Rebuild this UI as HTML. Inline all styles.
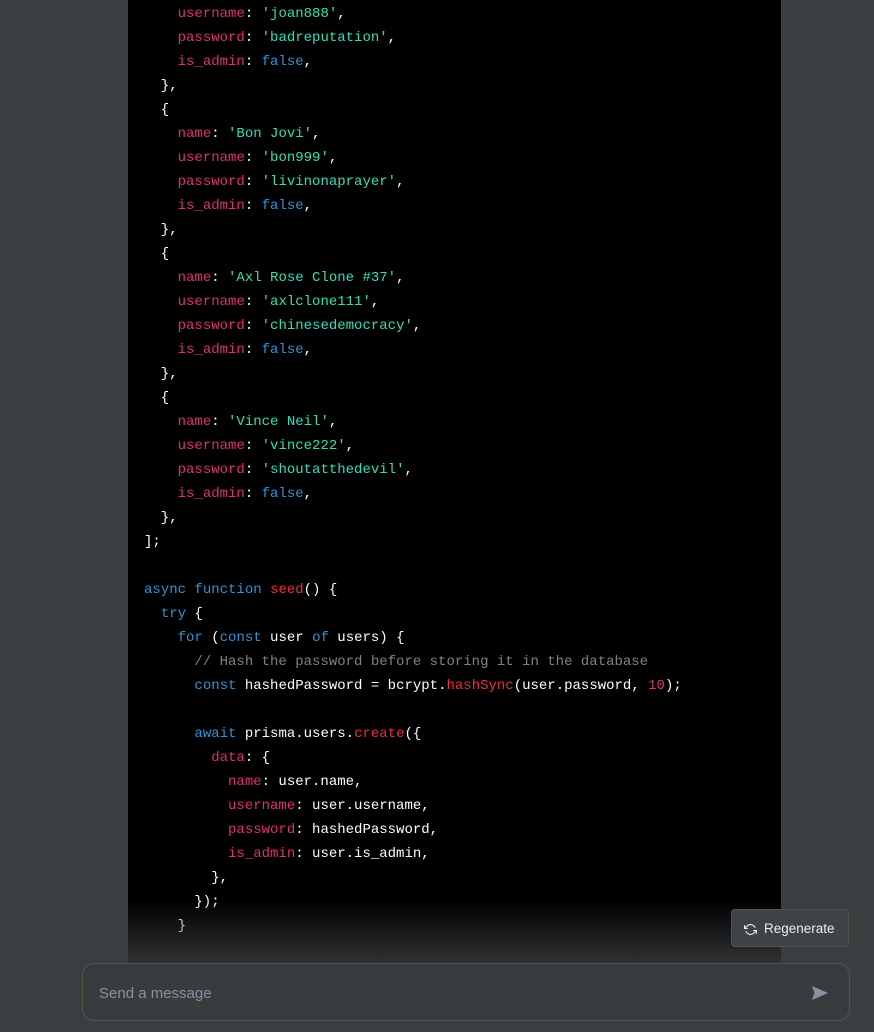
<!DOCTYPE html>
<html><head><style>
body{margin:0;width:874px;height:1032px;background:#3b3e41;overflow:hidden;position:relative;font-family:"Liberation Sans",sans-serif}
.code{position:absolute;left:128px;top:0;width:653px;height:1032px;background:#000}
pre{margin:0;position:absolute;left:144px;top:2px;font-family:"Liberation Mono",monospace;font-size:14px;line-height:24px;color:#fff}
.k{color:#df3079}.s{color:#2fe0bb}.b{color:#2e95d3}.c{color:#ffffff80}.f{color:#f22c3d}
.fade{position:absolute;left:0;top:900px;width:874px;height:132px;background:linear-gradient(rgba(59,62,65,0),#3b3e41 60%)}
.regen{position:absolute;left:731px;top:909px;width:118px;height:38px;border:1px solid #565246;border-radius:4px;background:#3f4246;color:#ececf1;font-size:13.5px;box-sizing:border-box;line-height:38px;padding-left:32px}
.regen svg{position:absolute;left:12px;top:13px}
.input{position:absolute;left:82px;top:963px;width:768px;height:58px;box-sizing:border-box;border:1px solid #565246;border-radius:12px;background:#393c3f;color:#8e8ea0;font-size:15px;line-height:60px;padding-left:16px}
.input svg{position:absolute;right:20px;top:21px}
</style></head><body>
<div class="code"></div>
<pre>    <span class="k">username</span>: <span class="s">'joan888'</span>,
    <span class="k">password</span>: <span class="s">'badreputation'</span>,
    <span class="k">is_admin</span>: <span class="b">false</span>,
  },
  {
    <span class="k">name</span>: <span class="s">'Bon Jovi'</span>,
    <span class="k">username</span>: <span class="s">'bon999'</span>,
    <span class="k">password</span>: <span class="s">'livinonaprayer'</span>,
    <span class="k">is_admin</span>: <span class="b">false</span>,
  },
  {
    <span class="k">name</span>: <span class="s">'Axl Rose Clone #37'</span>,
    <span class="k">username</span>: <span class="s">'axlclone111'</span>,
    <span class="k">password</span>: <span class="s">'chinesedemocracy'</span>,
    <span class="k">is_admin</span>: <span class="b">false</span>,
  },
  {
    <span class="k">name</span>: <span class="s">'Vince Neil'</span>,
    <span class="k">username</span>: <span class="s">'vince222'</span>,
    <span class="k">password</span>: <span class="s">'shoutatthedevil'</span>,
    <span class="k">is_admin</span>: <span class="b">false</span>,
  },
];

<span class="b">async</span> <span class="b">function</span> <span class="f">seed</span>() {
  <span class="b">try</span> {
    <span class="b">for</span> (<span class="b">const</span> user <span class="b">of</span> users) {
      <span class="c">// Hash the password before storing it in the database</span>
      <span class="b">const</span> hashedPassword = bcrypt.<span class="f">hashSync</span>(user.password, <span class="k">10</span>);

      <span class="b">await</span> prisma.users.<span class="f">create</span>({
        <span class="k">data</span>: {
          <span class="k">name</span>: user.name,
          <span class="k">username</span>: user.username,
          <span class="k">password</span>: hashedPassword,
          <span class="k">is_admin</span>: user.is_admin,
        },
      });
    }
</pre>
<div class="fade"></div>
<div class="regen"><svg width="13" height="13" viewBox="0 0 24 24" fill="none" stroke="#ececf1" stroke-width="2"><path d="M1 4v6h6M23 20v-6h-6"/><path d="M20.5 9A9 9 0 0 0 5.6 5.6L1 10m22 4-4.6 4.4A9 9 0 0 1 3.5 15"/></svg>Regenerate</div>
<div class="input">Send a message<svg width="18" height="16" viewBox="0 0 18 16"><path d="M1 1L17 8L1 15L3.5 8Z" fill="#8e8ea0"/></svg></div>
</body></html>
